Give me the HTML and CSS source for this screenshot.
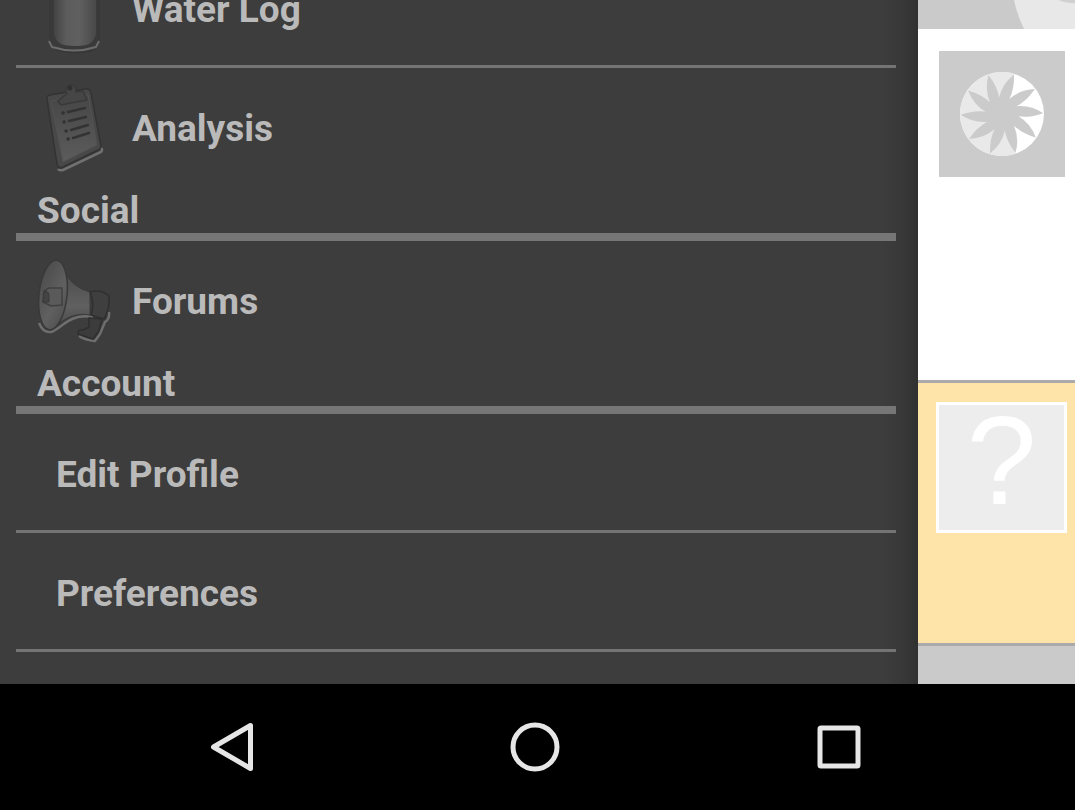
FILE: index.html
```html
<!DOCTYPE html>
<html lang="en">
<head>
<meta charset="utf-8">
<meta name="viewport" content="width=device-width, initial-scale=1">
<title>Menu</title>
<link rel="stylesheet" href="styles.css">
</head>
<body>
<div class="device">
  <div class="app">
    <nav class="drawer" aria-label="Main menu">
      <div class="menu">
        <ul class="menu-list">
          <li class="menu-item divided">
            <a class="menu-link" href="#water">
              <svg class="menu-icon" viewBox="-2 0 80 100" aria-hidden="true">
                <defs>
                  <linearGradient id="glass" x1="0" x2="1" y1="0" y2="0">
                    <stop offset="0" stop-color="#444"/><stop offset=".3" stop-color="#5c5c5c"/><stop offset=".6" stop-color="#606060"/><stop offset="1" stop-color="#484848"/>
                  </linearGradient>
                </defs>
                <path d="M14 0V78Q16 90 24 91Q40 95 56 91Q62 90 63 78V0Z" fill="#3a3a3a" stroke="#363636"/>
                <path d="M18 0V74Q20 83 28 85Q40 87 50 85Q58 83 60 74V0Z" fill="url(#glass)"/>
                <path d="M13 81L16 87Q38 94 60 87L63 81" fill="none" stroke="#6c6c6c" stroke-width="2"/>
              </svg>
              <span>Water Log</span>
            </a>
          </li>
          <li class="menu-item">
            <a class="menu-link" href="#analysis">
              <svg class="menu-icon" viewBox="-2 0 80 100" aria-hidden="true">
                <defs>
                  <linearGradient id="paper" x1="0" x2="0" y1="0" y2="1">
                    <stop offset="0" stop-color="#464646"/><stop offset="1" stop-color="#5c5c5c"/>
                  </linearGradient>
                </defs>
                <path d="M22 90Q23 92 27 91L65 73Q67 71 65 69" fill="none" stroke="#717171" stroke-width="2.500"/>
                <path d="M11 20Q10 17 14 16L49 10Q54 9 55 14L65 67Q65 70 62 71L27 88Q22 90 21 85Z" fill="#484848" stroke="#333" stroke-width="1.500"/>
                <path d="M15 22L52 16L61 66L27 83Z" fill="url(#paper)" stroke="#525252"/>
                <path d="M22 22L28 17L31 15Q28 8 34 6Q40 5 40 13L47 12L51 21L25 26Z" fill="#464646" stroke="#393939" stroke-width="1.500"/>
                <circle cx="34" cy="9" r="2.500" fill="#303030"/>
                <g stroke="#333" stroke-width="2.500" stroke-linecap="round">
                  <path d="M32 33L49 29M33 42L50 38M35 51L52 46M37 59L53 54"/>
                  <path d="M27 34H27.200M28 43H28.200M30 52H30.200M32 60H32.200" stroke-width="3.500"/>
                </g>
              </svg>
              <span>Analysis</span>
            </a>
          </li>
        </ul>
        <h2 class="menu-heading">Social</h2>
        <ul class="menu-list">
          <li class="menu-item">
            <a class="menu-link" href="#forums">
              <svg class="menu-icon" viewBox="-1 0 80 100" aria-hidden="true">
                <defs>
                  <linearGradient id="horn" x1="0" x2="0" y1="0" y2="1">
                    <stop offset="0" stop-color="#4a4a4a"/><stop offset=".6" stop-color="#606060"/><stop offset="1" stop-color="#484848"/>
                  </linearGradient>
                  <linearGradient id="bell" x1="0" x2="1" y1="0" y2="1">
                    <stop offset="0" stop-color="#484848"/><stop offset=".6" stop-color="#606060"/><stop offset="1" stop-color="#4c4c4c"/>
                  </linearGradient>
                </defs>
                <path d="M4 71Q8 81 16 80C27 77 33 61 58 65M44 84Q50 88 60 89L65 82L70 70Q75 67 74 60" fill="none" stroke="#6e6e6e" stroke-width="2.500"/>
                <path d="M28 18Q38 36 55 40V63C40 60 28 67 17 78Z" fill="url(#horn)" stroke="#3b3b3b"/>
                <path d="M55 40Q66 37 74 44Q75 57 69 67L56 63Q60 52 55 40Z" fill="#3f3f3f" stroke="#303030" stroke-width="1.500"/>
                <path d="M54 66L67 67L64 79L58 87L43 82Q43 77 48 78L54 75Z" fill="#3c3c3c" stroke="#2f2f2f" stroke-width="1.500"/>
                <ellipse cx="18" cy="43" rx="14" ry="35" transform="rotate(6 18 43)" fill="url(#bell)" stroke="#393939" stroke-width="1.500"/>
                <path d="M9 39L14 36H27V53L16 54L8 50Z" fill="#5a5a5a" stroke="#404040" stroke-width="1.500"/>
                <path d="M9 40Q13 38 14 43V50H8Z" fill="#444" stroke="#383838"/>
              </svg>
              <span>Forums</span>
            </a>
          </li>
        </ul>
        <h2 class="menu-heading">Account</h2>
        <ul class="menu-list">
          <li class="menu-item divided"><a class="menu-link plain" href="#profile">Edit Profile</a></li>
          <li class="menu-item divided"><a class="menu-link plain" href="#preferences">Preferences</a></li>
        </ul>
      </div>
    </nav>
    <main class="feed">
      <div class="feed-top">
        <svg class="feed-cover" viewBox="0 0 157 29" aria-hidden="true">
          <path d="M96 0H157V29H106Q99 15 96 0Z" fill="#e8e8e8"/>
          <path d="M140 0Q149 4 157 3V0Z" fill="#d0d0d0"/>
        </svg>
      </div>
      <article class="post">
        <svg class="avatar" viewBox="-63 -63 126 126" role="img" aria-label="Member picture">
          <defs>
            <path id="petal" d="M0 0L-3 -16Q0 -30 12 -39.500Q12.500 -25 7 -14Z"/>
          </defs>
          <circle r="42" fill="#fff"/>
          <path d="M12 -40.250A42 42 0 1 0 13 40L0 0Z" fill="#e9e9e9"/>
          <g fill="#cbcbcb">
            <circle r="17"/>
            <use href="#petal"/>
            <use href="#petal" transform="rotate(36)"/>
            <use href="#petal" transform="rotate(72)"/>
            <use href="#petal" transform="rotate(108)"/>
            <use href="#petal" transform="rotate(144)"/>
            <use href="#petal" transform="rotate(180)"/>
            <use href="#petal" transform="rotate(216)"/>
            <use href="#petal" transform="rotate(252)"/>
            <use href="#petal" transform="rotate(288)"/>
            <use href="#petal" transform="rotate(324)"/>
          </g>
        </svg>
      </article>
      <article class="post unread">
        <div class="avatar unknown">?</div>
      </article>
    </main>
  </div>
  <div class="system-bar">
    <button class="system-button" type="button" aria-label="Back">
      <svg class="system-icon" viewBox="0 0 56 56" aria-hidden="true"><path d="M9.500 28L46.500 6.500V49.500Z"/></svg>
    </button>
    <button class="system-button" type="button" aria-label="Home">
      <svg class="system-icon" viewBox="0 0 56 56" aria-hidden="true"><circle cx="28" cy="28" r="22"/></svg>
    </button>
    <button class="system-button" type="button" aria-label="Recent apps">
      <svg class="system-icon" viewBox="0 0 56 56" aria-hidden="true"><rect x="9" y="9" width="38" height="38" rx="1"/></svg>
    </button>
  </div>
</div>
</body>
</html>
```
FILE: styles.css
```css
* {
  box-sizing: border-box;
}

body {
  margin: 0;
  background: #000;
  font-family: Roboto, "Noto Sans", sans-serif;
}

.device {
  display: flex;
  flex-direction: column;
  height: 100vh;
}

.app {
  display: flex;
  flex: 1;
  min-height: 0;
  overflow: hidden;
}

.drawer {
  flex: 1;
  overflow: hidden;
  padding: 0 22px 0 16px;
  background: linear-gradient(to left, #303030, #373737 12px, #3d3d3d 36px);
}

/* The list rests part-way through its first row. */
.menu {
  margin-top: -51px;
  color: #bababa;
  font-size: 37px;
  font-weight: 700;
  line-height: 44px;
}

.menu-list {
  margin: 0;
  padding: 0;
  list-style: none;
}

.divided {
  border-bottom: 3px solid #747474;
}

.menu-link {
  display: flex;
  align-items: center;
  gap: 18px;
  height: 116px;
  padding: 6px 18px 0;
  color: inherit;
  text-decoration: none;
}

.plain {
  padding-left: 40px;
}

.menu-icon {
  width: 80px;
  height: 100px;
}

.menu-heading {
  margin: 0;
  padding: 5px 21px 0;
  border-bottom: 8px solid #767676;
  font-size: inherit;
  font-weight: inherit;
}

.feed {
  display: flex;
  flex-direction: column;
  flex: 0 0 157px;
  min-width: 0;
  background: #cacaca;
}

.feed-cover {
  display: block;
  width: 100%;
}

.post {
  min-height: 354px;
  padding: 22px 10px 22px 21px;
  border-bottom: 3px solid #aaa;
  background: #fff;
}

.unread {
  min-height: 263px;
  padding: 19px 8px 19px 18px;
  background: #fee4a9;
}

.avatar {
  display: block;
  width: 126px;
  height: 126px;
  background: #cbcbcb;
}

.unknown {
  width: 131px;
  height: 131px;
  border: 3px solid #fff;
  background: #ededed;
  color: #fff;
  font-family: "Liberation Sans", Arial, sans-serif;
  font-size: 126px;
  line-height: 112px;
  text-align: center;
}

.system-bar {
  display: grid;
  grid-template-columns: repeat(3, 1fr);
  height: 126px;
  padding: 0 84px 0 80px;
  background: #000;
}

.system-button {
  display: flex;
  align-items: center;
  justify-content: center;
  padding: 0;
  border: 0;
  background: none;
}

.system-icon {
  width: 56px;
  height: 56px;
  fill: none;
  stroke: #e6e6e6;
  stroke-width: 5;
  stroke-linejoin: round;
}
```
